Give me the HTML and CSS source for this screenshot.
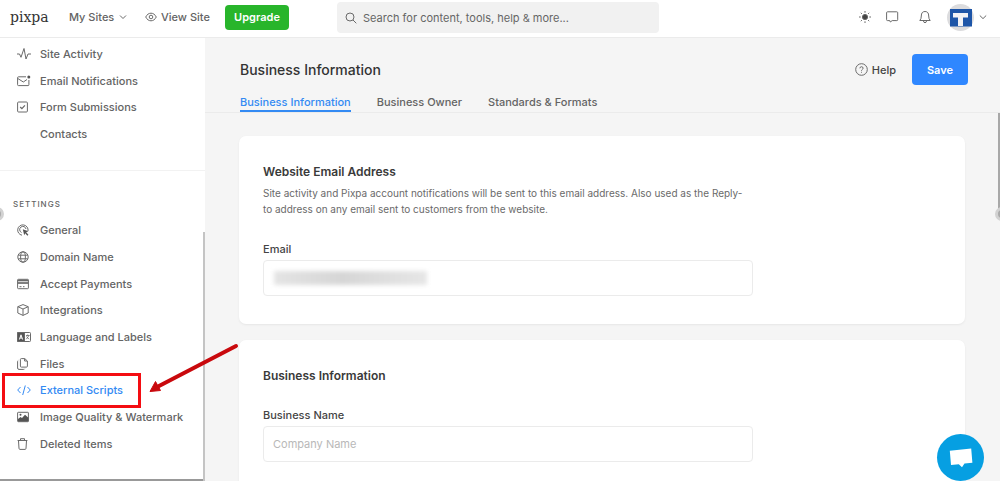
FILE: index.html
```
<!DOCTYPE html>
<html lang="en">
<head>
<meta charset="utf-8">
<meta name="viewport" content="width=device-width, initial-scale=1">
<title>Business Information</title>
<link rel="stylesheet" href="styles.css">
</head>
<body>
<header class="topbar">
  <div class="topbar-left">
    <a class="logo" href="#">pixpa</a>
    <button class="link-btn sites" type="button">My Sites
      <svg class="chev" viewBox="0 0 8 8"><path d="M1 2.5 4 5.5 7 2.5"/></svg>
    </button>
    <a class="link-btn view" href="#">
      <svg class="eye" viewBox="0 0 12 10"><path d="M.7 5C2 2.500 3.800 1.200 6 1.200S10 2.500 11.300 5C10 7.500 8.200 8.800 6 8.800S2 7.500.700 5Z"/><circle cx="6" cy="5" r="1.800"/></svg>
      View Site</a>
    <button class="upgrade" type="button">Upgrade</button>
  </div>
  <label class="search">
    <svg viewBox="0 0 12 12"><circle cx="5" cy="5" r="4"/><path d="m8 8 3.300 3.300"/></svg>
    <input type="search" placeholder="Search for content, tools, help &amp; more..." aria-label="Search">
  </label>
  <div class="topbar-right">
    <button class="icon-btn" type="button" aria-label="Theme">
      <svg viewBox="0 0 14 14"><circle cx="7" cy="7" r="2.600" fill="#444"/><path d="M7 1v1.700M7 11.300V13M1 7h1.700M11.300 7H13M2.800 2.800l1.100 1.100M10.100 10.100l1.100 1.100M2.800 11.200l1.100-1.100M10.100 3.900l1.100-1.100"/></svg>
    </button>
    <button class="icon-btn" type="button" aria-label="Messages">
      <svg viewBox="0 0 14 14"><path d="M2.500 1.800h9.300q.900 0 .900.900v7q0 .900-.900.900H7.200L5.300 12 4.800 10.600H2.500q-.900 0-.900-.900v-7q0-.900.900-.900Z"/></svg>
    </button>
    <button class="icon-btn bell" type="button" aria-label="Alerts">
      <svg viewBox="0 0 14 14"><path d="M1.800 10.500q1.500-1.500 1.500-4.500 0-4.500 3.700-4.500T10.700 6q0 3 1.500 4.500ZM5.500 11q.200 1.700 1.500 1.700T8.500 11"/></svg>
    </button>
    <button class="account" type="button" aria-label="Account">
      <svg class="avatar" viewBox="0 0 27 27"><circle cx="13.500" cy="13.500" r="13.500" fill="#dcdcde"/><path d="M3 5h22v17.500H3z" fill="#1d55a8"/><path d="M6 9h15v4.500h-5V22h-5v-8.500H6Z" fill="#f1f2f6"/></svg>
      <svg class="chev" viewBox="0 0 8 8"><path d="M.800 2.500 4 5.600 7.200 2.500"/></svg>
    </button>
  </div>
</header>

<div class="body">
  <nav class="sidebar">
    <ul class="menu menu-top">
      <li><a href="#"><svg viewBox="0 0 14 12"><path d="M0 6h2.500l1.500 3.300L7 .500l2 10.500 2-5h3"/></svg>Site Activity</a></li>
      <li><a href="#"><svg viewBox="0 0 14 12"><path d="M9 1.800H1.500Q.600 1.800.600 2.700v7q0 .900.900.900h9.500q.900 0 .900-.900V5M.800 3.500 6.300 7 10 4.500"/><circle cx="11.800" cy="2" r="1.500" fill="#555" stroke="none"/></svg>Email Notifications</a></li>
      <li><a href="#"><svg viewBox="0 0 14 12"><rect x=".600" y="1" width="9.800" height="10" rx="1"/><path d="m3.200 6 1.700 1.600 3-3.200" stroke-width="1.300"/></svg>Form Submissions</a></li>
      <li><a href="#"><svg viewBox="0 0 14 12"></svg>Contacts</a></li>
    </ul>
    <h2 class="group">SETTINGS</h2>
    <ul class="menu menu-settings">
      <li><a href="#"><svg viewBox="0 0 14 12"><path d="M5 11.200A5.200 5.200 0 1 1 11 7M4.500 8.500A3.200 3.200 0 1 1 9 5"/><path d="m5.800 5.300 5.600 2-2.200 1 2.200 2.400-1 1-2.200-2.400-1 2Z" fill="#555" stroke="none"/></svg>General</a></li>
      <li><a href="#"><svg viewBox="0 0 14 12"><circle cx="6" cy="6" r="5.200"/><ellipse cx="6" cy="6" rx="2.400" ry="5.200"/><path d="M1.300 4.200h9.400M1.300 7.800h9.400"/></svg>Domain Name</a></li>
      <li><a href="#"><svg viewBox="0 0 14 12"><rect x=".600" y="1.300" width="10.800" height="9.400" rx=".800"/><path d="M.600 2.500h10.800" stroke-width="1.600"/><path d="M.600 5h10.800" stroke-width="1.700"/><path d="M2.500 8.700h2M6 8.700h1.500"/></svg>Accept Payments</a></li>
      <li><a href="#"><svg viewBox="0 0 14 12"><path d="M6 .600 11.200 2.700V9L6 11.400.800 9V2.700ZM.800 2.700 6 5l5.200-2.300M6 5v6.400"/></svg>Integrations</a></li>
      <li><a href="#"><svg viewBox="0 0 14 12"><rect x=".500" y="1.500" width="13" height="9" rx=".800"/><path d="M.500 1.500h7v9h-7z" fill="#555"/><path d="M2.400 8.500 4 3.800l1.600 4.700M3 7h2" stroke="#fff"/><path d="M9 4.500h3.500M10.700 3.500v1M12 4.500 9.300 8.200M9.500 5.500l2.500 2.700" stroke-width=".800"/></svg>Language and Labels</a></li>
      <li><a href="#"><svg viewBox="0 0 14 12"><path d="M4.300.600h3.500L10.400 3v5.200q0 .900-.900.900H4.300q-.900 0-.900-.900V1.500q0-.900.900-.900ZM7.600.800V3h2.600M1.200 2.500q-.600.300-.600 1V10q0 1.400 1.400 1.400h4.500q.900 0 1.200-.600"/></svg>Files</a></li>
      <li class="current"><a href="#" aria-current="page"><svg viewBox="0 0 14 12"><path d="M3.500 3 .700 6l2.800 3M10.500 3l2.800 3-2.800 3M8.300 1.500l-2.600 9.500"/></svg>External Scripts</a><span class="marker"></span></li>
      <li><a href="#"><svg viewBox="0 0 14 12"><rect x=".600" y="1.300" width="10.800" height="9.400" rx=".600"/><path d="M1 10V8l2.500-2L5 7l3-3.200 3.400 3V10.500H1Z" fill="#555" stroke="none"/><circle cx="3.500" cy="3.800" r="1" fill="#555" stroke="none"/></svg>Image Quality &amp; Watermark</a></li>
      <li><a href="#"><svg viewBox="0 0 14 12"><path d="M.600 2.500h9.800M3.500 2.400V.700h4v1.700M1.500 2.700 2 10.400q.100 1 1 1h5q.900 0 1-1l.500-7.700"/></svg>Deleted Items</a></li>
    </ul>
    <span class="side-thumb"></span>
  </nav>

  <main class="main">
    <div class="page-head">
      <h1>Business Information</h1>
      <div class="actions">
        <a class="help" href="#"><svg viewBox="0 0 13 13"><circle cx="6.500" cy="6.500" r="5.800"/><path d="M4.900 5.300Q5 3.700 6.500 3.700T8.100 5.200Q8.100 6 7.200 6.500 6.500 6.900 6.500 7.700M6.500 8.800v.900"/></svg>Help</a>
        <button class="save" type="button">Save</button>
      </div>
    </div>
    <div class="tabs">
      <a class="active" href="#">Business Information</a>
      <a href="#">Business Owner</a>
      <a href="#">Standards &amp; Formats</a>
    </div>
    <div class="cards">
      <section class="card">
        <h2>Website Email Address</h2>
        <p>Site activity and Pixpa account notifications will be sent to this email address. Also used as the Reply-to address on any email sent to customers from the website.</p>
        <label for="email">Email</label>
        <div class="field">
          <input id="email" type="email">
          <span class="redacted"></span>
        </div>
      </section>
      <section class="card">
        <h2>Business Information</h2>
        <label for="company">Business Name</label>
        <div class="field"><input id="company" type="text" placeholder="Company Name"></div>
      </section>
    </div>
  </main>
</div>

<svg class="arrow" viewBox="0 0 90 52"><path d="M87 3 10 43" stroke="#c9090d" stroke-width="4" stroke-linecap="round"/><path d="M1 48.500 6.500 38.500l5 9Z" fill="#c9090d" stroke="#c9090d"/></svg>
<span class="page-thumb"></span>
<span class="handle handle-left"></span>
<span class="handle handle-right"></span>
<button class="chat" type="button" aria-label="Chat"><svg viewBox="0 0 24 20"><path d="M.800 2.800 22.200.500 23.400 14.800 15.500 15.600 13 19.300 9.800 16.200 2 17Z" fill="#fff"/></svg></button>
</body>
</html>
```

FILE: styles.css
```
* {
  box-sizing: border-box;
}

body {
  margin: 0;
  height: 100vh;
  display: flex;
  flex-direction: column;
  overflow: hidden;
  background: #f5f5f5;
  color: #646464;
  font-family: Inter, "Liberation Sans", sans-serif;
  font-size: 11px;
  font-weight: 500;
}

a {
  color: inherit;
  text-decoration: none;
}

button,
input {
  font: inherit;
  color: inherit;
  margin: 0;
}

button {
  border: 0;
  padding: 0;
  background: none;
}

h1,
h2,
p,
ul {
  margin: 0;
  padding: 0;
  font-weight: 500;
}

svg {
  display: block;
  flex: none;
  fill: none;
  stroke: #6a6a6a;
  stroke-width: 1;
}

/* Top bar */
.topbar {
  flex: none;
  display: grid;
  grid-template-columns: 337px minmax(0, 322px) 1fr;
  height: 38px;
  padding-bottom: 3px;
  background: #fff;
  border-bottom: 1px solid #ebebeb;
}

.topbar-left {
  display: flex;
  align-items: center;
  padding-left: 10px;
}

.logo {
  width: 59px;
  color: #333;
  font: 14px "DejaVu Serif", serif;
}

.link-btn {
  display: flex;
  align-items: center;
  gap: 5px;
}

.sites {
  width: 76px;
}

.eye {
  width: 12px;
  height: 10px;
}

.chev {
  width: 8px;
  height: 8px;
}

.view {
  width: 80px;
  gap: 4px;
}

.upgrade {
  width: 64px;
  height: 25px;
  border-radius: 4px;
  background: #28b52b;
  color: #fff;
  font-weight: 600;
}

.search {
  display: flex;
  align-items: center;
  gap: 6px;
  height: 31px;
  margin-top: 2px;
  padding: 0 8px;
  border-radius: 4px;
  background: #f1f1f1;
}

.search svg {
  width: 12px;
  height: 12px;
}

.search input {
  flex: 1;
  min-width: 0;
  padding: 0;
  border: 0;
  outline: 0;
  background: none;
  font-weight: 400;
}

.search input::placeholder {
  color: #666;
}

.topbar-right {
  display: flex;
  align-items: center;
  justify-content: flex-end;
  padding-right: 13px;
  gap: 13px;
}

.icon-btn svg {
  width: 14px;
  height: 14px;
}

.bell {
  margin-left: 6px;
}

.account {
  display: flex;
  align-items: center;
  gap: 5px;
  margin-left: 2px;
}

.avatar {
  width: 27px;
  height: 27px;
  stroke: none;
}

/* Sidebar */
.body {
  flex: 1;
  min-height: 0;
  display: flex;
}

.sidebar {
  position: relative;
  flex: none;
  display: flex;
  flex-direction: column;
  width: 205px;
  padding: 3px 0 24px;
  background: #fff;
  box-shadow: inset 0 -2px #999;
}

.menu {
  display: grid;
  grid-auto-rows: 1fr;
  list-style: none;
}

.menu-top {
  flex: none;
  height: 106px;
}

.menu-settings {
  flex: 1;
}

.menu li {
  position: relative;
  display: grid;
}

.menu a {
  display: flex;
  align-items: center;
  gap: 9px;
  padding-left: 17px;
}

.menu svg {
  width: 14px;
  height: 12px;
}

.current {
  color: #338af3;
}

.current svg {
  stroke: #338af3;
}

.marker {
  position: absolute;
  inset: -4px 64px -4px 2px;
  border: 3px solid #f40d12;
}

.group {
  margin-top: 23px;
  padding: 27px 13px 6px;
  border-top: 1px solid #f2f2f2;
  font-size: 8px;
  line-height: 13px;
  letter-spacing: 1px;
}

.side-thumb {
  position: absolute;
  top: 194px;
  right: 0;
  bottom: 0;
  width: 2px;
  background: #c4c4c4;
}

/* Main */
.main {
  flex: 1;
  min-width: 0;
  display: flex;
  flex-direction: column;
}

.page-head {
  display: flex;
  align-items: center;
  justify-content: space-between;
  padding: 16px 32px 0 35px;
}

h1 {
  color: #333;
  font-size: 14px;
}

.actions,
.help {
  display: flex;
  align-items: center;
}

.actions {
  gap: 16px;
}

.help {
  gap: 4px;
  color: #444;
}

.help svg {
  width: 13px;
  height: 13px;
}

.save {
  width: 56px;
  height: 31px;
  border-radius: 4px;
  background: #2f87ff;
  color: #fff;
  font-weight: 600;
}

.tabs {
  flex: none;
  display: flex;
  gap: 26px;
  height: 28px;
  padding: 0 35px;
  border-bottom: 1px solid #ebebeb;
}

.tabs a {
  padding-top: 9px;
  line-height: 16px;
}

.tabs .active {
  color: #338af3;
  border-bottom: 2px solid #338af3;
}

.cards {
  flex: 1;
  min-height: 0;
  display: flex;
  flex-direction: column;
  gap: 16px;
  padding: 23px 35px 0 34px;
  overflow: hidden;
}

.card {
  flex: none;
  padding: 26px 24px 28px;
  border-radius: 7px;
  background: #fff;
  box-shadow: 0 1px 2px #e6e6e6;
}

.card h2 {
  color: #3a3a3a;
  font-size: 12px;
  font-weight: 600;
  line-height: 19px;
}

.card p {
  max-width: 484px;
  margin-top: 4px;
  padding-bottom: 2px;
  color: #6a6a6a;
  font-size: 10px;
  font-weight: 400;
  line-height: 16px;
}

.card label {
  display: block;
  margin: 22px 0 3px;
  color: #444;
  line-height: 16px;
}

.field {
  position: relative;
  max-width: 490px;
}

.field input {
  display: block;
  width: 100%;
  height: 36px;
  padding: 0 9px;
  border: 1px solid #ebebeb;
  border-radius: 4px;
  background: #fff;
  font-weight: 400;
}

.field input::placeholder {
  color: #b8b8b8;
}

.redacted {
  position: absolute;
  top: 11px;
  left: 11px;
  width: 153px;
  height: 14px;
  background: linear-gradient(90deg, #e4e4e4, #d6d6d6 45%, #dedede 70%, #e6e6e6);
  filter: blur(2px);
}

/* Overlays */
.arrow {
  position: absolute;
  top: 343px;
  left: 149px;
  width: 90px;
  height: 52px;
}

.page-thumb {
  position: absolute;
  top: 113px;
  right: 0;
  width: 2px;
  height: 100px;
  background: #a8a8a8;
}

.handle {
  position: absolute;
  top: 207px;
  width: 14px;
  height: 14px;
  border: 3px solid #d2d2d2;
  border-radius: 50%;
  background: #aaa;
}

.handle-left {
  left: -10px;
}

.handle-right {
  right: -9px;
}

.chat {
  position: absolute;
  right: 16px;
  bottom: 0;
  display: grid;
  place-items: center;
  width: 47px;
  height: 47px;
  border-radius: 50%;
  background: #069fe2;
}

.chat svg {
  width: 24px;
  height: 20px;
  stroke: none;
}
```
